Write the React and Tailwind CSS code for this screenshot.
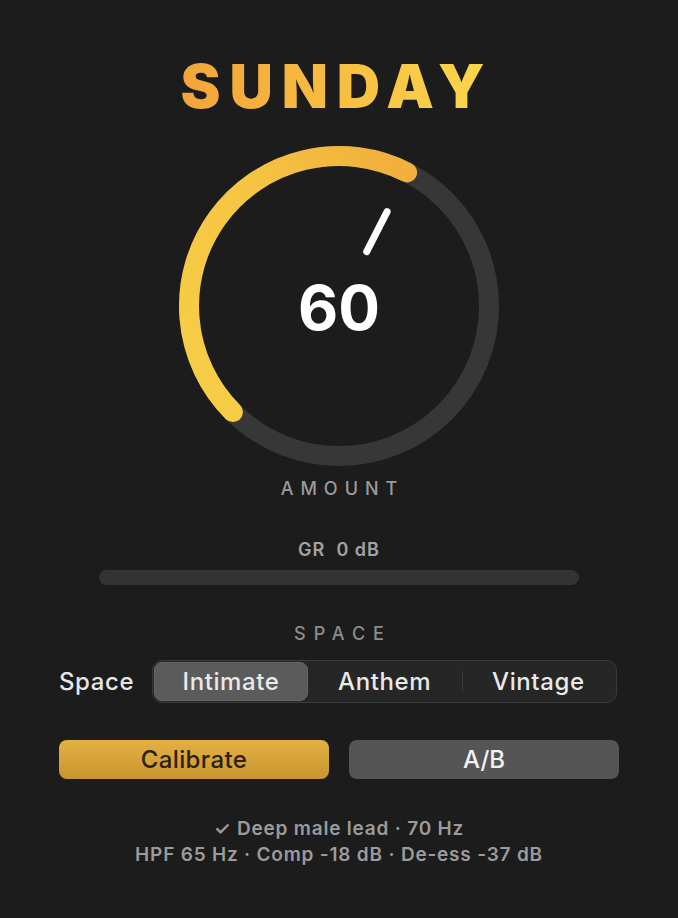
import React from 'react';

const font = { fontFamily: 'Inter, "Liberation Sans", sans-serif' };

// knob geometry (viewBox 340x340, center 170,170)
const Knob = ({ value }) => {
  const cx = 170;
  const cy = 170;
  const r = 150;
  const start = -135;
  const end = start + (270 * value) / 100;
  const pt = (deg, rad) => {
    const a = (deg * Math.PI) / 180;
    return [cx + rad * Math.sin(a), cy - rad * Math.cos(a)];
  };
  const [sx, sy] = pt(start, r);
  const [ex, ey] = pt(end, r);
  const large = end - start > 180 ? 1 : 0;
  const [p1x, p1y] = pt(end, 61);
  const [p2x, p2y] = pt(end, 106);

  return (
    <div className="relative w-[340px] h-[340px] mt-[20px]">
      <svg width="340" height="340" viewBox="0 0 340 340">
        <defs>
          <linearGradient id="arc" x1="0" y1="1" x2="1" y2="0">
            <stop offset="0" stopColor="#F7CD46" />
            <stop offset="0.55" stopColor="#F6C643" />
            <stop offset="1" stopColor="#F1AE3C" />
          </linearGradient>
        </defs>
        <circle cx={cx} cy={cy} r={r} fill="none" stroke="#373737" strokeWidth="20" />
        <path
          d={`M ${sx} ${sy} A ${r} ${r} 0 ${large} 1 ${ex} ${ey}`}
          fill="none"
          stroke="url(#arc)"
          strokeWidth="20"
          strokeLinecap="round"
        />
        <line x1={p1x} y1={p1y} x2={p2x} y2={p2y} stroke="#ffffff" strokeWidth="7" strokeLinecap="round" />
      </svg>
      <div className="absolute inset-0 flex items-center justify-center">
        <span className="text-[62px] leading-none font-bold text-white mt-[4px]">{value}</span>
      </div>
    </div>
  );
};

const Segmented = ({ options, active }) => (
  <div className="ml-[18px] w-[465px] h-[43px] rounded-[10px] bg-[#262626] border border-[#3a3a3a] p-[1px] flex items-stretch">
    {options.map((o, i) => (
      <div key={o} className="relative flex-1 flex items-center justify-center">
        {i === active && (
          <div className="absolute inset-0 rounded-[8px] bg-[#5b5b5b] border border-[#666666]" />
        )}
        {i === 2 && <div className="absolute left-0 top-[9px] bottom-[9px] w-px bg-[#3a3a3a]" />}
        <span className="relative text-[24px] leading-none font-medium tracking-[0.6px] text-[#e9e9e9]">{o}</span>
      </div>
    ))}
  </div>
);

export default function App() {
  return (
    <div style={font} className="w-[678px] h-[918px] bg-[#1c1c1c] flex flex-col items-center overflow-hidden">
      <h1 className="mt-[56px] text-[60px] leading-none font-black tracking-[9px] pr-[4px] bg-gradient-to-r from-[#F3A43A] to-[#FAD84A] bg-clip-text text-transparent">
        SUNDAY
      </h1>

      <Knob value={60} />

      <div className="mt-[4px] text-[18px] leading-none font-medium tracking-[7px] pl-[7px] text-[#9a9a9a]">AMOUNT</div>

      <div className="mt-[43px] text-[18px] leading-none font-semibold tracking-[1px] text-[#a3a3a3]">
        GR&nbsp; 0 dB
      </div>
      <div className="mt-[11px] w-[480px] h-[15px] rounded-full bg-[#333333]" />

      <div className="mt-[40px] text-[18px] leading-none font-medium tracking-[8px] pl-[8px] text-[#8c8c8c]">SPACE</div>

      <div className="mt-[17px] w-[560px] flex items-center">
        <span className="text-[24px] leading-none font-medium tracking-[0.6px] text-[#e6e6e6]">Space</span>
        <Segmented options={['Intimate', 'Anthem', 'Vintage']} active={0} />
      </div>

      <div className="mt-[37px] w-[560px] grid grid-cols-2 gap-5">
        <button className="h-[39px] rounded-[8px] bg-gradient-to-b from-[#E3B142] to-[#C8952F] text-[24px] leading-none font-medium tracking-[0.4px] text-[#2a2110]">
          Calibrate
        </button>
        <button className="h-[39px] rounded-[8px] bg-[#555555] text-[24px] leading-none font-medium text-[#f2f2f2]">
          A/B
        </button>
      </div>

      <div className="mt-[37px] text-[19px] leading-[26px] font-semibold tracking-[0.8px] text-[#9b9b9b] text-center">
        <div>✓ Deep male lead · 70 Hz</div>
        <div>HPF 65 Hz · Comp -18 dB · De-ess -37 dB</div>
      </div>
    </div>
  );
}
